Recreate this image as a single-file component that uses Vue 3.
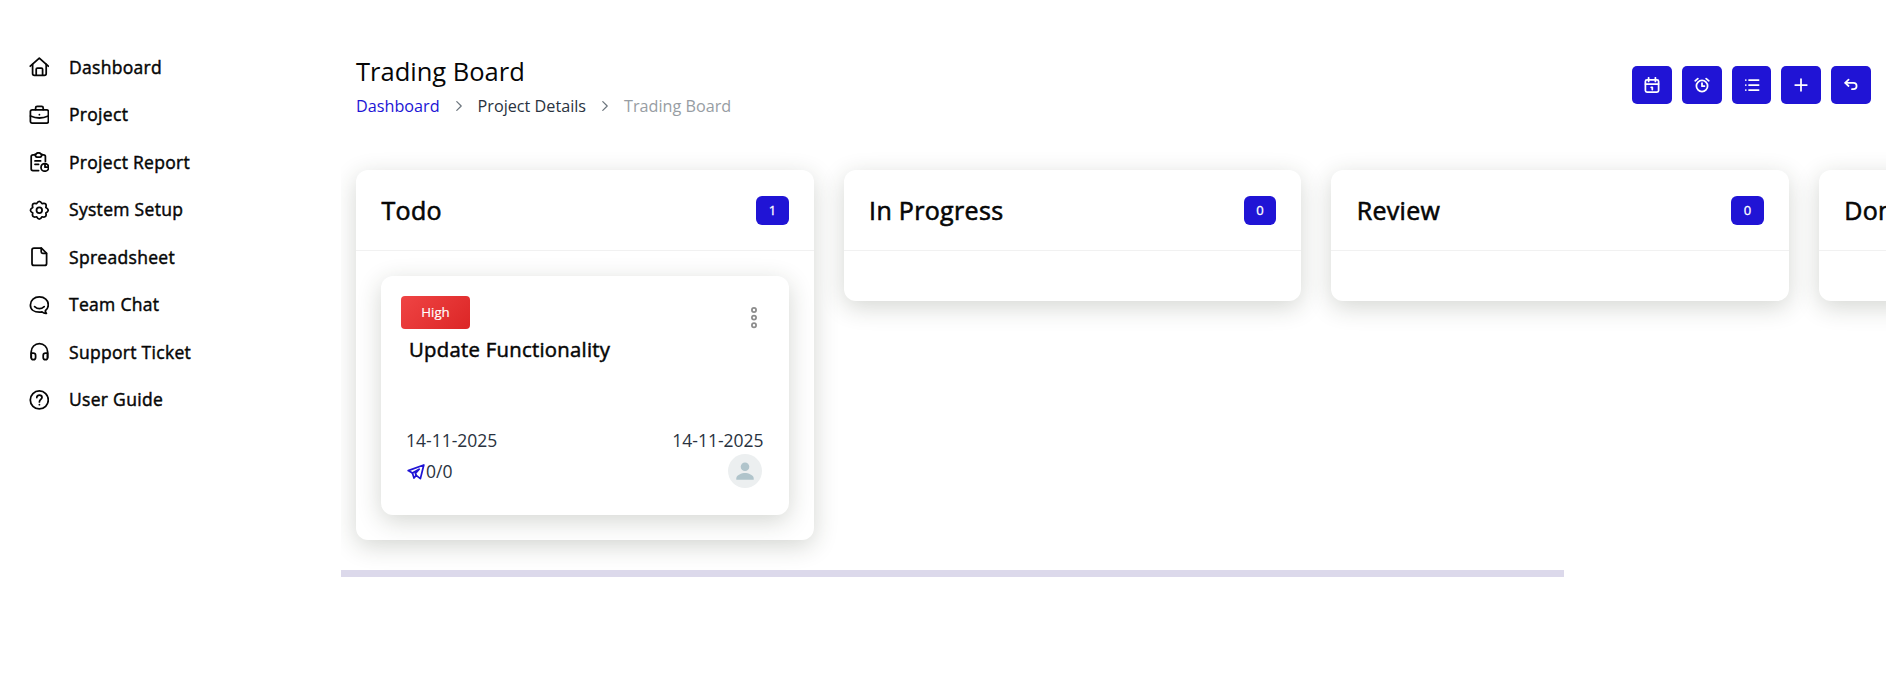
<template>
  <div class="layout">
    <!-- Sidebar -->
    <aside class="sidebar">
      <a v-for="item in menu" :key="item.label" class="menu-item" href="#">
        <svg class="menu-icon" viewBox="0 0 20 20" width="20" height="20">
          <path v-for="d in item.paths" :key="d" :d="d" />
        </svg>
        <span>{{ item.label }}</span>
      </a>
    </aside>

    <main class="content">
      <!-- Page header -->
      <header class="page-header">
        <div>
          <h4 class="page-title">Trading Board</h4>
          <nav class="breadcrumb">
            <a href="#" class="crumb-link">Dashboard</a>
            <svg class="crumb-sep" viewBox="0 0 6 10" width="6" height="10"><path d="M.8.6 5.2 5 .8 9.4" /></svg>
            <span class="crumb">Project Details</span>
            <svg class="crumb-sep" viewBox="0 0 6 10" width="6" height="10"><path d="M.8.6 5.2 5 .8 9.4" /></svg>
            <span class="crumb-active">Trading Board</span>
          </nav>
        </div>
        <div class="actions">
          <button v-for="action in actions" :key="action.name" class="action-btn">
            <svg viewBox="0 0 16 16" width="16" height="16">
              <path v-for="d in action.paths" :key="d" :d="d" />
            </svg>
          </button>
        </div>
      </header>

      <!-- Kanban board -->
      <div class="board">
        <section v-for="column in columns" :key="column.title" class="column">
          <div class="column-header">
            <h4 class="column-title">{{ column.title }}</h4>
            <span class="count">{{ column.tasks.length }}</span>
          </div>
          <div class="column-body">
            <article v-for="task in column.tasks" :key="task.title" class="task">
              <div class="task-top">
                <span class="priority">{{ task.priority }}</span>
                <svg class="dots" viewBox="0 0 6 22" width="6" height="22">
                  <circle cx="3" cy="3" r="2.1" />
                  <circle cx="3" cy="10.6" r="2.1" />
                  <circle cx="3" cy="18.2" r="2.1" />
                </svg>
              </div>
              <h5 class="task-title">{{ task.title }}</h5>
              <div class="task-row task-dates">
                <span>{{ task.start }}</span>
                <span>{{ task.end }}</span>
              </div>
              <div class="task-row task-meta">
                <span class="progress">
                  <svg class="plane" viewBox="0 0 18 16" width="18" height="16">
                    <path d="M1.2 6.6 16.8 1 13.4 14.6 9.2 11.4 7 14 5.4 9 Z" />
                    <path d="M5.4 9 12.2 5.2 8.4 9.4 9.2 11.4" />
                  </svg>{{ task.done }}/{{ task.total }}
                </span>
                <svg class="avatar" viewBox="0 0 34 34" width="34" height="34">
                  <circle cx="17" cy="17" r="17" fill="#eceff0" />
                  <circle cx="17" cy="12.8" r="4.3" fill="#b0c4cb" />
                  <path d="M8.3 25.8v-1.4c0-3.4 5.6-5.3 8.7-5.3s8.7 1.9 8.7 5.3v1.4z" fill="#b0c4cb" />
                </svg>
              </div>
            </article>
          </div>
        </section>
      </div>
      <div class="scrollbar"></div>
    </main>
  </div>
</template>

<script setup>
const menu = [
  {
    label: 'Dashboard',
    paths: [
      'M1.3 9.2 10.3 1.1 19.3 9.2',
      'M3.6 7.4V16.6Q3.6 18.4 5.4 18.4H15.4Q17.2 18.4 17.2 16.6V7.4',
      'M7.2 18.2V12.2Q7.2 11 8.4 11H12.4Q13.6 11 13.6 12.2V18.2'
    ]
  },
  {
    label: 'Project',
    paths: [
      'M3.2 4.8H17.6Q19.4 4.8 19.4 6.6V16.2Q19.4 18 17.6 18H3.2Q1.4 18 1.4 16.2V6.6Q1.4 4.8 3.2 4.8Z',
      'M6.6 4.6V3Q6.6 1.4 8.2 1.4H12.6Q14.2 1.4 14.2 3V4.6',
      'M1.5 11Q10.4 15 19.3 11',
      'M10.4 9.6V9.7'
    ]
  },
  {
    label: 'Project Report',
    paths: [
      'M6.4 2.8H4Q2.2 2.8 2.2 4.6V17Q2.2 18.6 4 18.6H9.6',
      'M12.8 2.8H14.6Q16.4 2.8 16.4 4.6V9.4',
      'M9.5.8Q11.3.8 11.8 2H12.8Q12.8 5 11 5H8Q6.2 5 6.2 2H7.2Q7.7.8 9.5.8Z',
      'M6 8.9H11.6M6 12.3H9.6',
      'M12 15.4A3.8 3.8 0 1 0 19.6 15.4A3.8 3.8 0 1 0 12 15.4Z',
      'M16 12V15.2H19.4'
    ]
  },
  {
    label: 'System Setup',
    paths: [
      'M13.02 3.64Q18.22 2.28 16.86 7.48Q21.5 10.2 16.86 12.92Q18.22 18.12 13.02 16.76Q10.3 21.4 7.58 16.76Q2.38 18.12 3.74 12.92Q-.9 10.2 3.74 7.48Q2.38 2.28 7.58 3.64Q10.3-1 13.02 3.64Z',
      'M7.5 10.2A2.8 2.8 0 1 0 13.1 10.2A2.8 2.8 0 1 0 7.5 10.2Z'
    ]
  },
  {
    label: 'Spreadsheet',
    paths: [
      'M12.4 1H5Q3 1 3 3V16.4Q3 18.4 5 18.4H15.6Q17.6 18.4 17.6 16.4V6.4Z',
      'M12.2 1.2V4.8Q12.2 6.3 13.7 6.3H17.4'
    ]
  },
  {
    label: 'Team Chat',
    paths: [
      'M16.4 15.7C18 14.2 19.3 12.4 19.3 9.9C19.3 5 15.4 1.9 10.4 1.9S1.4 5 1.4 9.9S5.4 17.2 10.4 17.2Q11.8 17.2 13 16.9Q15 18.6 17.4 18.3Q16.2 17.2 16.4 15.7Z',
      'M5.6 11.6Q10.4 15.8 15.2 11.6'
    ]
  },
  {
    label: 'Support Ticket',
    paths: [
      'M2.2 15.5V9.8A8.2 8.2 0 0 1 18.6 9.8V15.5',
      'M2.2 11.2H4.2Q6.6 11.2 6.6 13.4V15.4Q6.6 17.6 4.4 17.6T2.2 15.4Z',
      'M18.6 11.2H16.6Q14.2 11.2 14.2 13.4V15.4Q14.2 17.6 16.4 17.6T18.6 15.4Z'
    ]
  },
  {
    label: 'User Guide',
    paths: [
      'M1.3 9.9A9 9 0 1 0 19.3 9.9A9 9 0 1 0 1.3 9.9Z',
      'M7.8 7.6C7.8 4.2 13 4.4 13 7.5C13 9.4 10.4 9.6 10.4 11.9',
      'M10.4 14.5V14.7'
    ]
  }
]

const actions = [
  {
    name: 'calendar',
    paths: [
      'M3 2.8H13Q14.6 2.8 14.6 4.4V13.4Q14.6 15 13 15H3Q1.4 15 1.4 13.4V4.4Q1.4 2.8 3 2.8Z',
      'M1.5 7H14.5M4.6.8V4.4M11.4.8V4.4',
      'M7.2 10.3H8.3V12.6'
    ]
  },
  {
    name: 'alarm',
    paths: [
      'M2.4 9A5.6 5.6 0 1 0 13.6 9A5.6 5.6 0 1 0 2.4 9Z',
      'M8 6V9.2H10.4',
      'M1.2 3.8 3.8 1.6M14.8 3.8 12.2 1.6'
    ]
  },
  {
    name: 'list',
    paths: ['M5 3H14.6M5 8H14.6M5 13H14.6', 'M1.8 3V3.1M1.8 8V8.1M1.8 13V13.1']
  },
  {
    name: 'add',
    paths: ['M8 2.2V13.8M2.2 8H13.8']
  },
  {
    name: 'back',
    paths: ['M5.6 2.6 2.2 5.8 5.6 9', 'M2.4 5.8H10.4A3.2 3.2 0 0 1 10.4 12.2H9']
  }
]

const columns = [
  {
    title: 'Todo',
    tasks: [
      {
        title: 'Update Functionality',
        priority: 'High',
        start: '14-11-2025',
        end: '14-11-2025',
        done: 0,
        total: 0
      }
    ]
  },
  { title: 'In Progress', tasks: [] },
  { title: 'Review', tasks: [] },
  { title: 'Done', tasks: [] }
]
</script>

<style>
body {
  margin: 0;
  background: #fff;
  overflow: hidden;
}
</style>

<style scoped>
.layout {
  display: flex;
  height: 697px;
  font-family: 'Open Sans', sans-serif;
  color: #293240;
}

h4,
h5 {
  margin: 0;
  color: #060606;
}

a {
  text-decoration: none;
}

/* Sidebar */
.sidebar {
  flex: none;
  width: 341px;
  padding-top: 43.5px;
  box-sizing: border-box;
}

.menu-item {
  display: flex;
  align-items: center;
  gap: 20px;
  height: 47.5px;
  padding-left: 29px;
  font-size: 17.5px;
  letter-spacing: 0.3px;
  -webkit-text-stroke: 0.45px currentColor;
  color: #060606;
}

.menu-item span {
  margin-top: -1px;
}

.menu-icon,
.action-btn svg,
.crumb-sep,
.dots,
.plane {
  flex: none;
  fill: none;
  stroke: currentColor;
  stroke-width: 1.75;
  stroke-linecap: round;
  stroke-linejoin: round;
}

/* Content */
.content {
  width: 1545px;
}

.page-header {
  display: flex;
  justify-content: space-between;
  height: 110px;
  padding: 55px 15px 0;
  box-sizing: border-box;
}

.page-title {
  margin-top: -1px;
  font-size: 25.5px;
  line-height: 34px;
  font-weight: 400;
}

.breadcrumb {
  display: flex;
  align-items: center;
  margin-top: 6px;
  font-size: 16.2px;
  line-height: 24px;
}

.crumb-link {
  color: #2014d5;
}

.crumb-sep {
  margin: 0 16px;
  color: #6c757d;
  stroke-width: 1.2;
}

.crumb-active {
  color: #979da3;
}

.actions {
  display: flex;
  gap: 10px;
  margin-top: 11px;
}

.action-btn {
  display: flex;
  align-items: center;
  justify-content: center;
  width: 39.8px;
  height: 38px;
  padding: 0;
  border: none;
  border-radius: 5px;
  background: #2014d5;
  color: #fff;
}

/* Board */
.board {
  display: flex;
  align-items: flex-start;
  gap: 30px;
  height: 460px;
  padding: 60px 15px 0;
  box-sizing: border-box;
  overflow: hidden;
}

.column {
  flex: 0 0 457.6px;
  border-radius: 12px;
  background: #fff;
  box-shadow: 0 6px 24px rgba(40, 50, 30, 0.2);
}

.column-header {
  display: flex;
  align-items: center;
  justify-content: space-between;
  height: 81px;
  padding: 0 25px;
  box-sizing: border-box;
  border-bottom: 1px solid #f1f1f1;
}

.column-title {
  padding-left: 0.5px;
  font-size: 25px;
  font-weight: 400;
  letter-spacing: 0.32px;
  -webkit-text-stroke: 0.6px currentColor;
}

.count {
  width: 32.5px;
  border-radius: 6px;
  background: #2014d5;
  color: #fff;
  font-size: 13px;
  line-height: 29px;
  text-align: center;
  -webkit-text-stroke: 0.3px currentColor;
}

.column-body {
  padding: 25px;
}

.task {
  height: 239px;
  padding: 20px 25px 0 20px;
  box-sizing: border-box;
  border-radius: 12px;
  background: #fff;
  box-shadow: 0 6px 24px rgba(40, 50, 30, 0.2);
}

.task-top {
  display: flex;
  align-items: flex-start;
  justify-content: space-between;
}

.priority {
  width: 69px;
  border-radius: 4px;
  background: linear-gradient(135deg, #ef4444, #dc2626);
  color: #fff;
  font-size: 13.3px;
  line-height: 33px;
  text-align: center;
  -webkit-text-stroke: 0.15px currentColor;
}

.dots {
  margin: 11px 7px 0 0;
  color: #8c8c8c;
}

.task-title {
  margin: 6px 0 0 8px;
  font-size: 20.3px;
  font-weight: 400;
  line-height: 28px;
  letter-spacing: 0.28px;
  -webkit-text-stroke: 0.5px currentColor;
}

.task-row {
  display: flex;
  justify-content: space-between;
  padding-left: 5px;
  font-size: 17.5px;
  line-height: 26px;
}

.task-dates {
  margin-top: 64px;
}

.task-meta {
  align-items: center;
  height: 36px;
}

.progress {
  display: flex;
  align-items: center;
}

.plane {
  margin: 1px 1px 0 1px;
  color: #2014d5;
}

.avatar {
  margin-right: 2px;
}

.scrollbar {
  width: 1223px;
  height: 7px;
  background: #dcd9eb;
}
</style>
